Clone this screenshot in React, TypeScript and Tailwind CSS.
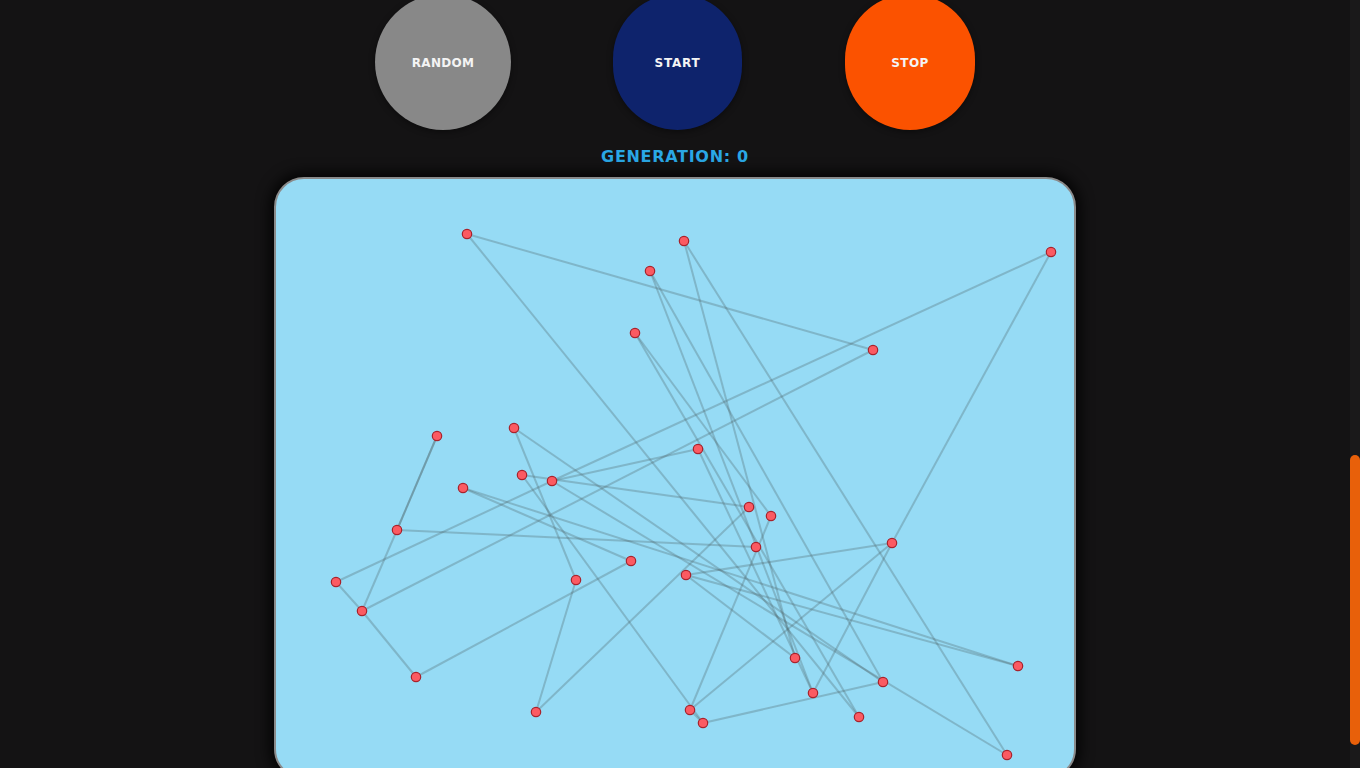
import React from "react";

type Pt = [number, number];

const N: Record<string, Pt> = {
  A: [467, 234], B: [684, 241], C: [1051, 252], D: [650, 271], E: [635, 333],
  F: [873, 350], G: [437, 436], H: [514, 428], I: [698, 449], J: [522, 475],
  K: [552, 481], L: [463, 488], M: [749, 507], Nn: [771, 516], O: [397, 530],
  P: [892, 543], Q: [756, 547], R: [336, 582], S: [631, 561], T: [576, 580],
  U: [686, 575], V: [362, 611], W: [416, 677], X: [795, 658], Y: [1018, 666],
  Z: [883, 682], a: [813, 693], b: [536, 712], c: [690, 710], d: [703, 723],
  e: [859, 717], f: [1007, 755],
};

const E: [string, string][] = [
  ["A", "F"], ["A", "e"], ["B", "f"], ["B", "X"], ["C", "P"], ["C", "K"], ["K", "R"],
  ["D", "a"], ["D", "Z"], ["E", "e"], ["E", "Nn"], ["F", "V"], ["G", "O"], ["G", "O"],
  ["H", "T"], ["H", "Z"], ["I", "K"], ["I", "a"], ["J", "M"], ["J", "d"], ["L", "S"],
  ["L", "Y"], ["b", "M"], ["c", "P"], ["Nn", "c"], ["c", "d"], ["O", "V"], ["O", "Q"],
  ["R", "V"], ["V", "W"], ["W", "S"], ["T", "b"], ["U", "P"], ["U", "X"], ["U", "Y"],
  ["d", "Z"], ["a", "P"], ["K", "f"],
];

const font = { fontFamily: '"DejaVu Sans", "Liberation Sans", sans-serif' };

export default function App() {
  return (
    <div className="flex h-screen w-full overflow-hidden bg-[#141314]" style={font}>
      <div className="flex flex-1 flex-col items-center">
        <div className="-mt-[6px] flex gap-[103px]">
          <div className="flex h-[136px] w-[136px] items-center justify-center rounded-full bg-[#888888] pt-[1px] text-[12px] font-bold tracking-[0.3px] text-[#f4f4f4] shadow-[0_2px_6px_rgba(0,0,0,0.4)]">
            RANDOM
          </div>
          <div className="-ml-px flex h-[136px] w-[129px] items-center justify-center rounded-full bg-[#0e236c] pt-[1px] text-[12px] font-bold tracking-[0.8px] text-[#f4f4f4] shadow-[0_2px_6px_rgba(0,0,0,0.4)]">
            START
          </div>
          <div className="flex h-[136px] w-[130px] items-center justify-center rounded-full bg-[#fb5200] pt-[1px] text-[12px] font-bold tracking-[0.4px] text-[#f4f4f4] shadow-[0_2px_6px_rgba(0,0,0,0.4)]">
            STOP
          </div>
        </div>
        <div className="mt-[17px] text-[16px] font-bold leading-[20px] tracking-[0.7px] text-[#2aa8e6]">
          GENERATION: 0
        </div>
        <div className="mt-[10px] h-[602px] w-[802px] shrink-0 overflow-hidden rounded-[30px] border-2 border-[#8a8a8a] bg-[#96dbf5] shadow-[0_0_14px_4px_rgba(0,0,0,0.85)]">
          <svg width="798" height="598" viewBox="276 179 798 598" className="block">
            {E.map(([p, q], i) => (
              <line
                key={i}
                x1={N[p][0]}
                y1={N[p][1]}
                x2={N[q][0]}
                y2={N[q][1]}
                stroke="rgba(75,95,100,0.3)"
                strokeWidth={2}
              />
            ))}
            {Object.entries(N).map(([k, [x, y]]) => (
              <circle key={k} cx={x} cy={y} r={4.7} fill="#fb5a62" stroke="#a8222c" strokeWidth={1.2} />
            ))}
          </svg>
        </div>
      </div>
      <div className="flex w-[10px] flex-col bg-[#1a191a]">
        <div className="h-[455px] shrink-0" />
        <div className="h-[290px] shrink-0 rounded-full bg-[#e8600a]" />
      </div>
    </div>
  );
}
